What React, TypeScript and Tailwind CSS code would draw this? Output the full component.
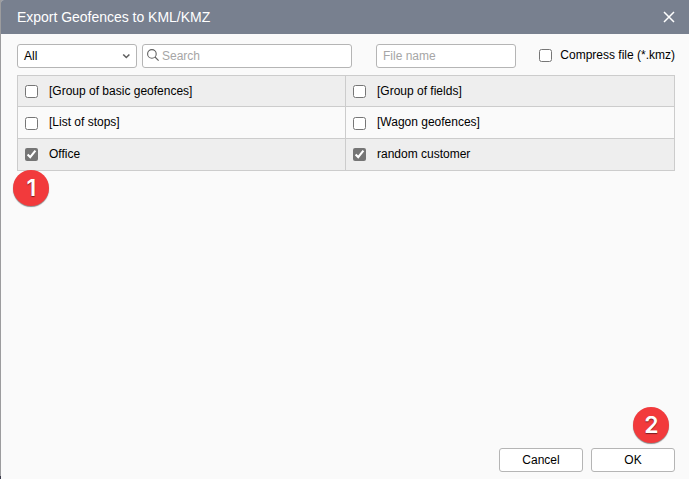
import React from "react";

function Check({ checked = false, className = "" }: { checked?: boolean; className?: string }) {
  return (
    <input
      type="checkbox"
      defaultChecked={checked}
      className={"m-0 size-[13px] shrink-0 accent-[#757575] " + className}
    />
  );
}

function Marker({ label, className }: { label: string; className: string }) {
  return (
    <div
      className={
        "absolute flex size-[36px] items-center justify-center rounded-full bg-[#f23a3c] pt-[2px] font-[Inter,sans-serif] text-[23px] leading-none font-semibold text-white shadow-[0_1px_1px_rgba(0,0,0,0.45)] [text-shadow:0_1px_1px_rgba(0,0,0,0.5)] " +
        className
      }
    >
      {label}
    </div>
  );
}

const field = "h-6 rounded-[3px] border border-[#b5b5b5] bg-white";

const rows = [
  { left: "[Group of basic geofences]", right: "[Group of fields]", checked: false, cls: "h-[31px] bg-[#eeeeee]", box: "", text: "" },
  { left: "[List of stops]", right: "[Wagon geofences]", checked: false, cls: "h-8 bg-[#fafafa]", box: "relative top-px", text: "pb-[2px]" },
  { left: "Office", right: "random customer", checked: true, cls: "h-8 bg-[#eeeeee]", box: "", text: "pb-[2px]" },
];

export default function App() {
  return (
    <div className="relative h-[479px] w-[689px] overflow-hidden bg-[#9c9c9e] pl-px font-['Liberation_Sans',Arial,sans-serif] text-[12px] text-black">
      <div className="flex h-full flex-col overflow-hidden rounded-tl-[3px] bg-[#fafafa]">
        <header className="flex h-[34px] shrink-0 items-center justify-between bg-[#78808f] pr-[14px] pl-4 text-white">
          <h1 className="text-[14px] leading-[34px] tracking-[-0.02px]">Export Geofences to KML/KMZ</h1>
          <svg width="12" height="12" viewBox="0 0 12 12" fill="none" stroke="currentColor" strokeWidth="1.5">
            <path d="M1 1 11 11M11 1 1 11" />
          </svg>
        </header>

        <div className="mt-[10px] flex h-6 pr-[14px] pl-4">
          <button className={field + " flex w-[120px] items-center justify-between pr-[6px] pl-[6px]"}>
            <span>All</span>
            <svg width="8" height="6" viewBox="0 0 8 6" fill="none" stroke="#606060" strokeWidth="1.6">
              <path d="M1.2 1.5 4.3 4.5 7.4 1.5" />
            </svg>
          </button>
          <label className={field + " ml-[5px] flex w-[210px] items-center pl-[4px]"}>
            <svg width="12" height="12" viewBox="0 0 12 12" fill="none" stroke="#606060" strokeWidth="1.1" className="mb-[2px] shrink-0">
              <circle cx="4.9" cy="4.9" r="4.3" />
              <path d="M8 8 11.6 11.6" />
            </svg>
            <input placeholder="Search" className="ml-[3px] w-[180px] outline-none placeholder:text-[#a6a6a6]" />
          </label>
          <input placeholder="File name" className={field + " ml-6 w-[140px] px-[6px] outline-none placeholder:text-[#a6a6a6]"} />
          <label className="ml-auto flex items-center pb-[1px]">
            <Check />
            <span className="ml-2 pb-[2px] leading-4">Compress file (*.kmz)</span>
          </label>
        </div>

        <div className="mt-[7px] mr-[14px] ml-4 border-x border-t border-[#cccccc]">
          {rows.map((r) => (
            <div key={r.left} className={"flex border-b border-[#cccccc] " + r.cls}>
              <label className="flex w-[328px] items-center border-r border-[#cccccc] pl-[7px]">
                <Check checked={r.checked} className={r.box} />
                <span className={"ml-[11px] " + r.text}>{r.left}</span>
              </label>
              <label className="flex flex-1 items-center pl-[7px]">
                <Check checked={r.checked} className={r.box} />
                <span className={"ml-[11px] " + r.text}>{r.right}</span>
              </label>
            </div>
          ))}
        </div>

        <footer className="mt-auto flex justify-end gap-2 pr-[14px] pb-[7px]">
          <button className={field + " w-[84px]"}>Cancel</button>
          <button className={field + " w-[84px]"}>OK</button>
        </footer>
      </div>
      <div className="absolute bottom-0 left-0 h-[3px] w-px bg-[#3c3c4c]" />
      <Marker label="1" className="top-[169.5px] left-[13.4px]" />
      <Marker label="2" className="top-[406.5px] left-[633.4px]" />
    </div>
  );
}
